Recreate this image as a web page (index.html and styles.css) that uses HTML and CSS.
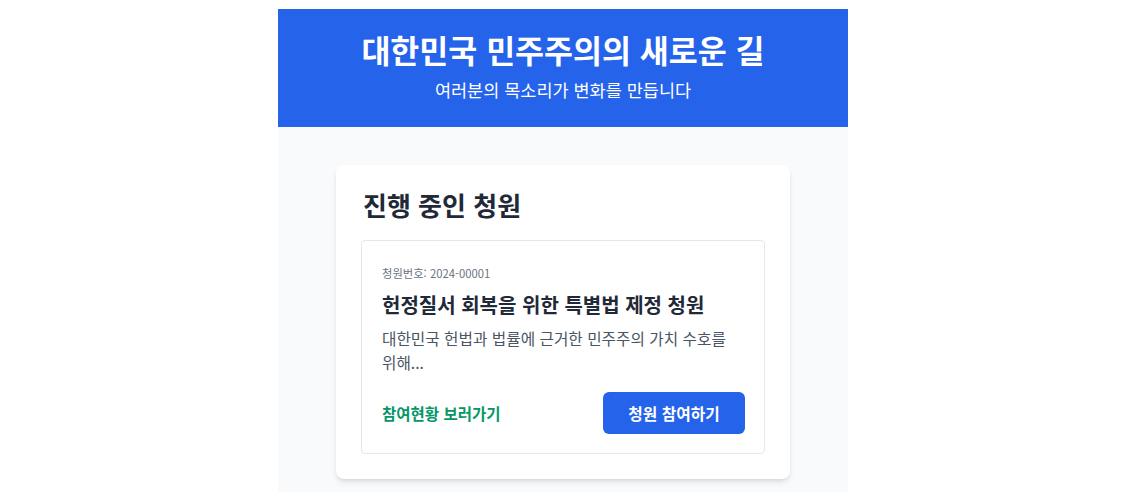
FILE: index.html
```html
<!DOCTYPE html>
<html lang="ko">
<head>
    <meta charset="UTF-8">
    <title>대한민국 민주주의의 새로운 길</title>
    <link rel="stylesheet" href="styles.css">
</head>
<body>
    <div class="page">
        <header class="hero">
            <h1>대한민국 민주주의의 새로운 길</h1>
            <p>여러분의 목소리가 변화를 만듭니다</p>
        </header>
        <main class="content">
            <section class="panel">
                <h2>진행 중인 청원</h2>
                <article class="petition">
                    <span class="petition-no">청원번호: 2024-00001</span>
                    <h3>헌정질서 회복을 위한 특별법 제정 청원</h3>
                    <p class="summary">대한민국 헌법과 법률에 근거한 민주주의 가치 수호를 위해...</p>
                    <div class="actions">
                        <a href="#" class="status-link">참여현황 보러가기</a>
                        <button class="join">청원 참여하기</button>
                    </div>
                </article>
            </section>
        </main>
    </div>
</body>
</html>
```

FILE: styles.css
```css
*{
    margin: 0;
    padding: 0;
    box-sizing: border-box;
    font-family: "Noto Sans CJK KR", "Noto Sans", sans-serif;
}
body{
    background: white;
    padding: 9px 0 0 278px;
    word-break: keep-all;
}
.page{
    width: 570px;
}
.hero{
    background: #2563eb;
    color: white;
    text-align: center;
    height: 118px;
    padding-top: 20px;
}
.hero h1{
    font-size: 31.5px;
    font-weight: bold;
    line-height: 40px;
}
.hero p{
    font-size: 17.5px;
    line-height: 24px;
    margin-top: 9px;
}
.content{
    background: #f9fafb;
    padding: 38px 58px 14px;
}
.panel{
    background: white;
    border-radius: 8px;
    box-shadow: 0 4px 6px -1px rgba(0,0,0,0.1), 0 2px 4px -2px rgba(0,0,0,0.1);
    padding: 25px;
}
.panel h2{
    font-size: 26px;
    line-height: 30px;
    color: #1f2937;
    margin: 0 0 20px 2px;
}
.petition{
    border: 1px solid #e5e7eb;
    border-radius: 4px;
    padding: 24px 19px 19px 20px;
}
.petition-no{
    display: block;
    font-size: 11.3px;
    line-height: 16px;
    color: #6b7280;
}
.petition h3{
    font-size: 20px;
    line-height: 28px;
    color: #1f2937;
    margin-top: 10px;
}
.summary{
    font-size: 15.7px;
    line-height: 24px;
    color: #4b5563;
    margin-top: 8px;
}
.actions{
    display: flex;
    justify-content: space-between;
    align-items: center;
    margin-top: 17px;
}
.status-link{
    color: #059669;
    font-size: 15.5px;
    font-weight: bold;
    text-decoration: none;
}
.join{
    width: 142px;
    height: 42px;
    border: none;
    border-radius: 6px;
    background: #2563eb;
    color: white;
    font-size: 15.75px;
    font-weight: bold;
    cursor: pointer;
}
```
